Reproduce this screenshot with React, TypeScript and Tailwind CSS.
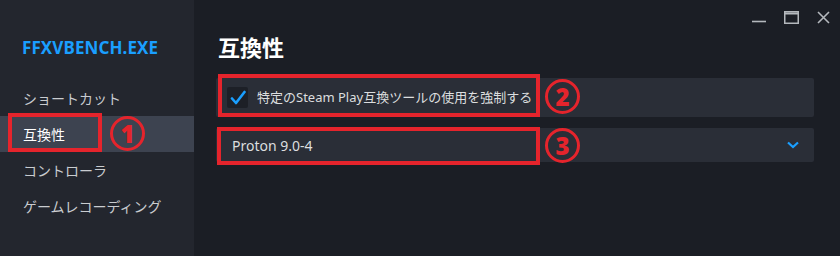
import React from "react";

const font = { fontFamily: '"Noto Sans", "Noto Sans CJK JP", sans-serif' };

function Circled({ n, className }: { n: string; className?: string }) {
  return (
    <span
      className={`absolute grid h-[35px] w-[35px] place-items-center rounded-full border-[3px] border-[#e5242c] text-[24px] font-black leading-none text-[#e5242c] ${className ?? ""}`}
    >
      {n}
    </span>
  );
}

function WindowControls() {
  return (
    <div className="flex h-[34px] items-center justify-end gap-[18px] pr-[10px] text-[#b4b8bd]">
      <svg width="14" height="14" viewBox="0 0 14 14" className="mt-[2px]">
        <path d="M0 10.5h14" stroke="currentColor" strokeWidth="1.6" />
      </svg>
      <svg width="15" height="13" viewBox="0 0 15 13">
        <rect x="0.75" y="0.75" width="13.5" height="11.5" fill="none" stroke="currentColor" strokeWidth="1.5" />
        <path d="M0.75 2.5h13.5" stroke="currentColor" strokeWidth="2" />
      </svg>
      <svg width="13" height="13" viewBox="0 0 13 13">
        <path d="M1 1l11 11M12 1L1 12" stroke="currentColor" strokeWidth="1.6" />
      </svg>
    </div>
  );
}

const menu = ["ショートカット", "互換性", "コントローラ", "ゲームレコーディング"];

export default function App() {
  return (
    <div style={font} className="flex h-[256px] w-[840px] overflow-hidden bg-[#1b1e25]">
      <aside className="w-[194px] shrink-0 bg-[#23262e] pt-[37px]">
        <p className="pl-[22px] text-[17px] font-bold leading-[22px] tracking-[0.1px] text-[#1a9fff]">
          FFXVBENCH.EXE
        </p>
        <nav className="mt-[21px]">
          {menu.map((item) => {
            const active = item === "互換性";
            return (
              <div
                key={item}
                className={`relative flex h-[36px] items-center pl-[23px] text-[14px] ${
                  active ? "bg-[#3d4350] text-white" : "text-[#c9ccd0]"
                }`}
              >
                {item}
                {active ? (
                  <>
                    <span className="absolute left-[8px] top-[-3px] h-[39px] w-[94px] border-4 border-[#e5242c]" />
                    <Circled n="1" className="left-[110px] top-[0px]" />
                  </>
                ) : null}
              </div>
            );
          })}
        </nav>
      </aside>

      <main className="flex-1">
        <WindowControls />
        <div className="pl-[22px] pr-[26px]">
          <h1 className="pl-[2px] text-[22px] font-bold leading-[26px] text-white">互換性</h1>

          <div className="relative mt-[18px] flex h-[39px] items-center rounded-[2px] bg-[#2a2e37] pl-[11px]">
            <span className="grid h-[21px] w-[21px] place-items-center rounded-[2px] bg-[#1d2027]">
              <svg width="16" height="16" viewBox="0 0 16 16">
                <path d="M2 8.5l4 4.5L14.5 2" fill="none" stroke="#1a9fff" strokeWidth="2.6" strokeLinecap="round" strokeLinejoin="round" />
              </svg>
            </span>
            <span className="ml-[9px] text-[13px] text-[#dcdedf]">特定のSteam Play互換ツールの使用を強制する</span>
            <span className="absolute left-[2px] top-[-4px] h-[43px] w-[322px] border-4 border-[#e5242c]" />
            <Circled n="2" className="left-[329px] top-[1px]" />
          </div>

          <div className="relative mt-[11px] flex h-[34px] items-center justify-between rounded-[2px] bg-[#2a2e37] pl-[16px] pr-[15px]">
            <span className="text-[14px] text-[#dcdedf]">Proton 9.0-4</span>
            <svg width="12" height="8" viewBox="0 0 12 8">
              <path d="M1 1.5l5 4.5 5-4.5" fill="none" stroke="#1a9fff" strokeWidth="2.2" />
            </svg>
            <span className="absolute left-[1px] top-[-1px] h-[38px] w-[323px] border-4 border-[#e5242c]" />
            <Circled n="3" className="left-[329px] top-[0px]" />
          </div>
        </div>
      </main>
    </div>
  );
}
